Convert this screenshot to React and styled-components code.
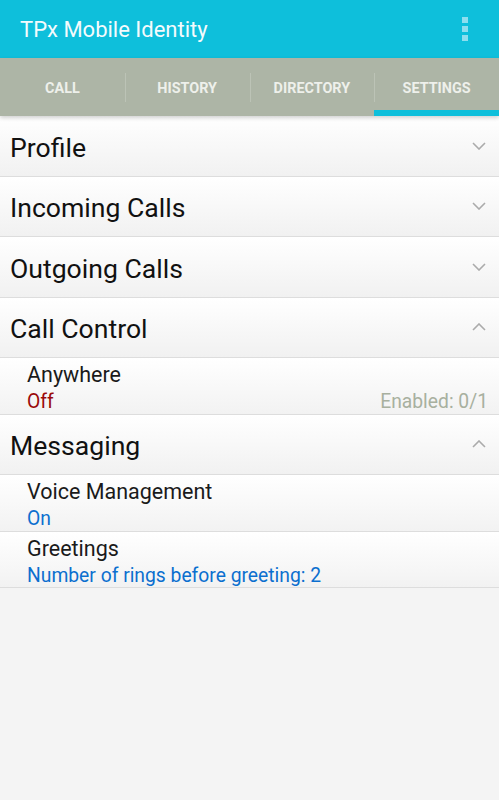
import React from "react";
import styled, { createGlobalStyle } from "styled-components";

const GlobalStyle = createGlobalStyle`
  html, body {
    margin: 0;
    padding: 0;
    background: #f4f4f4;
    font-family: Roboto, "Liberation Sans", Arial, sans-serif;
  }
`;

const Screen = styled.div`
  width: 499px;
  min-height: 800px;
  background: #f4f4f4;
  display: flex;
  flex-direction: column;
`;

const AppBar = styled.header`
  height: 58px;
  background: #0ebfdb;
  display: flex;
  align-items: center;
  justify-content: space-between;
  padding: 0 31px 0 20px;
  box-sizing: border-box;
`;

const Title = styled.h1`
  margin: 0;
  font-size: 22px;
  font-weight: 400;
  color: #f4fbfd;
`;

const MenuDots = styled.div`
  display: flex;
  flex-direction: column;
  gap: 3px;
  span {
    display: block;
    width: 6px;
    height: 6px;
    background: #8edeee;
  }
`;

const TabBar = styled.nav`
  height: 58px;
  background: #adb5a6;
  display: flex;
  position: relative;
  z-index: 1;
  box-shadow: 0 2px 4px rgba(0, 0, 0, 0.18);
`;

const Tab = styled.div`
  flex: 1;
  display: flex;
  align-items: center;
  justify-content: center;
  position: relative;
  font-size: 14.4px;
  font-weight: 700;
  color: #eef0eb;
  border-bottom: 6px solid ${(p) => (p.$active ? "#0ebfdb" : "transparent")};
  padding-top: 8px;
  &:not(:first-child)::before {
    content: "";
    position: absolute;
    left: 0;
    top: 15px;
    bottom: 8px;
    width: 1px;
    background: #bcc3b6;
  }
`;

const List = styled.div`
  display: flex;
  flex-direction: column;
`;

const Header = styled.div`
  height: 60.5px;
  box-sizing: border-box;
  display: flex;
  align-items: center;
  justify-content: space-between;
  padding: 3px 13px 0 10px;
  background: linear-gradient(#ffffff, #f1f1f1);
  border-bottom: 1px solid #dddddd;
  font-size: 26.6px;
  color: #111;
  svg {
    margin-top: -3px;
  }
`;

const Item = styled.div`
  height: 56.5px;
  box-sizing: border-box;
  padding: 3px 11px 0 27px;
  background: linear-gradient(#ffffff, #f2f2f2);
  border-bottom: 1px solid #dddddd;
  display: flex;
  flex-direction: column;
`;

const ItemTitle = styled.div`
  font-size: 21.5px;
  line-height: 28px;
  color: #1a1a1a;
`;

const ItemSub = styled.div`
  display: flex;
  justify-content: space-between;
  font-size: 19.3px;
  line-height: 24px;
  margin-top: 1px;
  color: ${(p) => p.$color};
`;

const Meta = styled.span`
  color: #a8b09f;
`;

function Chevron({ up }) {
  return (
    <svg width="14" height="8" viewBox="0 0 14 8">
      <polyline
        points={up ? "1,7 7,1 13,7" : "1,1 7,7 13,1"}
        fill="none"
        stroke="#ababab"
        strokeWidth="1.6"
      />
    </svg>
  );
}

function Section({ title, open, children }) {
  return (
    <>
      <Header>
        {title}
        <Chevron up={open} />
      </Header>
      {open && children}
    </>
  );
}

export default function App() {
  return (
    <Screen>
      <GlobalStyle />
      <AppBar>
        <Title>TPx Mobile Identity</Title>
        <MenuDots>
          <span />
          <span />
          <span />
        </MenuDots>
      </AppBar>
      <TabBar>
        <Tab>CALL</Tab>
        <Tab>HISTORY</Tab>
        <Tab>DIRECTORY</Tab>
        <Tab $active>SETTINGS</Tab>
      </TabBar>
      <List>
        <Section title="Profile" />
        <Section title="Incoming Calls" />
        <Section title="Outgoing Calls" />
        <Section title="Call Control" open>
          <Item>
            <ItemTitle>Anywhere</ItemTitle>
            <ItemSub $color="#9a0a0a">
              Off
              <Meta>Enabled: 0/1</Meta>
            </ItemSub>
          </Item>
        </Section>
        <Section title="Messaging" open>
          <Item>
            <ItemTitle>Voice Management</ItemTitle>
            <ItemSub $color="#0b6fcf">On</ItemSub>
          </Item>
          <Item>
            <ItemTitle>Greetings</ItemTitle>
            <ItemSub $color="#0b6fcf">Number of rings before greeting: 2</ItemSub>
          </Item>
        </Section>
      </List>
    </Screen>
  );
}
